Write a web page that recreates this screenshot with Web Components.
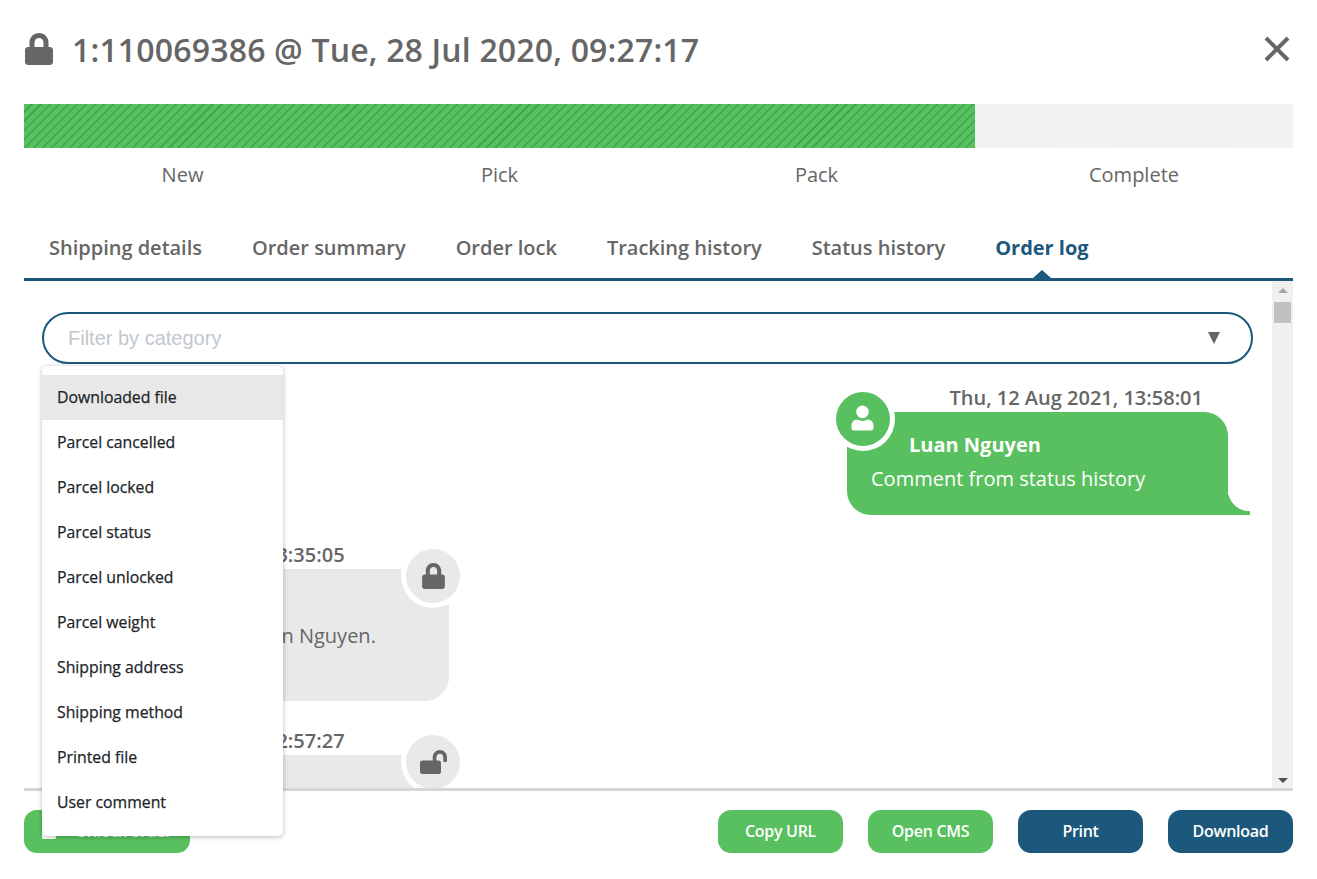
<!DOCTYPE html>
<html lang="en">
<head>
<meta charset="utf-8">
<title>Order log</title>
<style>
html,body{margin:0;padding:0;background:#fff;height:879px;overflow:hidden}
body{font-family:"Open Sans","Noto Sans",sans-serif;color:#666}
</style>
</head>
<body>
<order-dialog>
  <dialog-header>1:110069386 @ Tue, 28 Jul 2020, 09:27:17</dialog-header>
  <step-bar>
    <step-item done>New</step-item>
    <step-item done>Pick</step-item>
    <step-item done>Pack</step-item>
    <step-item>Complete</step-item>
  </step-bar>
  <tab-bar>
    <tab-item>Shipping details</tab-item>
    <tab-item>Order summary</tab-item>
    <tab-item>Order lock</tab-item>
    <tab-item>Tracking history</tab-item>
    <tab-item>Status history</tab-item>
    <tab-item active>Order log</tab-item>
  </tab-bar>
  <log-panel>
    <filter-select placeholder="Filter by category">
      <menu-item active>Downloaded file</menu-item>
      <menu-item>Parcel cancelled</menu-item>
      <menu-item>Parcel locked</menu-item>
      <menu-item>Parcel status</menu-item>
      <menu-item>Parcel unlocked</menu-item>
      <menu-item>Parcel weight</menu-item>
      <menu-item>Shipping address</menu-item>
      <menu-item>Shipping method</menu-item>
      <menu-item>Printed file</menu-item>
      <menu-item>User comment</menu-item>
    </filter-select>
    <chat-bubble slot="log" side="right" icon="user" date="Thu, 12 Aug 2021, 13:58:01" name="Luan Nguyen">Comment from status history</chat-bubble>
    <chat-bubble slot="log" side="left" icon="lock" date="Thu, 12 Aug 2021, 13:35:05" lines="2">Parcel locked by Luan Nguyen.</chat-bubble>
    <chat-bubble slot="log" side="left" icon="unlock" date="Thu, 12 Aug 2021, 12:57:27" lines="2"></chat-bubble>
  </log-panel>
  <dialog-footer>
    <app-button slot="start" color="green" wide icon="unlock">Unlock order</app-button>
    <app-button color="green">Copy URL</app-button>
    <app-button color="green">Open CMS</app-button>
    <app-button color="blue">Print</app-button>
    <app-button color="blue">Download</app-button>
  </dialog-footer>
</order-dialog>

<script>
const ICONS = {
  lock: ['0 0 448 512','M400 224h-24v-72C376 68.2 307.8 0 224 0S72 68.2 72 152v72H48c-26.5 0-48 21.5-48 48v192c0 26.5 21.5 48 48 48h352c26.5 0 48-21.5 48-48V272c0-26.5-21.5-48-48-48zm-104 0H152v-72c0-39.7 32.3-72 72-72s72 32.3 72 72v72z'],
  unlock: ['0 0 576 512','M423.5 0C339.5.3 272 69.5 272 153.5V224H48c-26.5 0-48 21.5-48 48v192c0 26.5 21.5 48 48 48h352c26.5 0 48-21.5 48-48V272c0-26.5-21.5-48-48-48h-48v-71.1c0-39.6 31.7-72.5 71.3-72.9 40-.4 72.7 32.1 72.7 72v80c0 13.3 10.7 24 24 24h32c13.3 0 24-10.7 24-24v-80C576 68 507.5-.3 423.5 0z'],
  user: ['0 0 24 26','M12 0a6.6 6.6 0 1 1 0 13.2a6.6 6.6 0 0 1 0-13.2zM6.5 14.6c1.500 .9 3.500 1.400 5.500 1.400s4-.5 5.500-1.400c3.500 .2 6 2.800 6 6.400v2.500c0 1.400-1.100 2.500-2.500 2.500H3c-1.400 0-2.500-1.100-2.500-2.500V21c0-3.600 2.500-6.200 6-6.400z']
};
function svg(name,w,h,fill){
  const [vb,d]=ICONS[name];
  return `<svg xmlns="http://www.w3.org/2000/svg" width="${w}" height="${h}" viewBox="${vb}" fill="${fill}" aria-hidden="true"><path d="${d}"/></svg>`;
}
function def(tag,css,html){
  customElements.define(tag,class extends HTMLElement{
    constructor(){
      super();
      const r=this.attachShadow({mode:'open'});
      r.innerHTML=`<style>${css}</style>`+(typeof html==='function'?html(this):html);
    }
  });
}

def('order-dialog',`
  :host{display:flex;flex-direction:column;box-sizing:border-box;width:1317px;height:879px;padding:0 24px;font-family:"Open Sans","Noto Sans",sans-serif;color:#666}
`,`<slot></slot>`);

customElements.define('dialog-header',class extends HTMLElement{
  constructor(){
    super();
    this.attachShadow({mode:'open'}).innerHTML=`<style>
      :host{display:flex;align-items:center;height:104px;flex:none;padding-bottom:4px;box-sizing:border-box}
      .lock{display:flex;flex:none;margin:0 19px 2px 1px}
      h1{flex:1;margin:0;font-size:32px;letter-spacing:.17px;line-height:40px;font-weight:600;color:#666;white-space:nowrap}
      .close{display:flex;flex:none;margin:0 3px 2px 0}
    </style>
    <span class="lock">${svg('lock',28,32,'#666')}</span>
    <h1><slot></slot></h1>
    <span class="close"><svg width="26" height="26" viewBox="0 0 26 26"><path d="M2 2 24 24M24 2 2 24" stroke="#666" stroke-width="4" fill="none"/></svg></span>`;
  }
});

def('step-bar',`:host{display:grid;grid-template-columns:317fr 317fr 317fr 318fr;flex:none}`,`<slot></slot>`);
def('step-item',`
  :host{display:block;text-align:center;font-size:20px;line-height:27px;color:#666}
  .bar{height:44px;margin-bottom:13px;background:repeating-linear-gradient(135deg,#f2f2f2 0,#f2f2f2 5.200px,#eeeeee 5.200px,#eeeeee 6.400px)}
  :host([done]) .bar{background:repeating-linear-gradient(135deg,#58c060 0,#58c060 4.900px,#3fa94a 4.900px,#3fa94a 6.400px)}
`,`<div class="bar"></div><slot></slot>`);

def('tab-bar',`
  :host{display:flex;flex:none;height:63px;margin-top:30px;box-sizing:border-box;border-bottom:3px solid #1b587c}
`,`<slot></slot>`);
def('tab-item',`
  :host{display:block;position:relative;padding:0 25px;font-size:20px;letter-spacing:-.008px;line-height:60px;font-weight:600;color:#666;white-space:nowrap}
  :host([active]){font-weight:700;color:#1b587c}
  :host([active])::after{content:"";position:absolute;left:50%;bottom:0;margin-left:-9px;border:9px solid transparent;border-top:0;border-bottom:8px solid #1b587c}
`,`<slot></slot>`);

def('log-panel',`
  :host{display:flex;flex:1;min-height:0}
  .main{flex:1;min-width:0;display:flex;flex-direction:column;padding:31px 19px 0 18px}
  .list{flex:1;min-height:0;overflow:hidden;padding-top:19px;display:flex;flex-direction:column;gap:25px;margin-right:-19px;padding-right:19px}
  .rail{flex:none;width:21px;background:#f0f0f0;display:flex;flex-direction:column;align-items:center;padding-top:7px;box-sizing:border-box}
  .up,.down{width:0;height:0;border:5px solid transparent;flex:none}
  .up{border-top:0;border-bottom:5px solid #a6a6a6}
  .down{border-bottom:0;border-top:5px solid #505050;margin-bottom:5px}
  .thumb{flex:none;width:17px;height:21px;margin-top:9px;background:#c1c1c1}
  .sp{flex:1}
`,`<div class="main"><slot></slot><div class="list"><slot name="log"></slot></div></div>
   <div class="rail"><i class="up"></i><i class="thumb"></i><i class="sp"></i><i class="down"></i></div>`);

def('filter-select',`
  :host{display:flex;align-items:center;position:relative;flex:none;height:52px;box-sizing:border-box;border:2px solid #1b587c;border-radius:26px;padding:0 31px 0 24px;background:#fff}
  .ph{flex:1;font:20px/30px "Liberation Sans",Arial,sans-serif;color:#c2c7cf}
  .arrow{flex:none;width:0;height:0;border:6.500px solid transparent;border-bottom:0;border-top:12px solid #666}
  .menu{position:absolute;z-index:20;left:-2px;top:52px;width:241px;box-sizing:border-box;padding:9px 0 11px;background:#fff;border-radius:5px;box-shadow:0 1px 5px rgba(0,0,0,.28)}
`,el=>`<span class="ph">${el.getAttribute('placeholder')}</span><i class="arrow"></i><div class="menu"><slot></slot></div>`);
def('menu-item',`
  :host{display:block;height:45px;padding:0 15px;font-size:15.800px;line-height:45px;font-weight:400;-webkit-text-stroke:.25px #212529;color:#212529;white-space:nowrap}
  :host([active]){background:#e8e8e8}
`,`<slot></slot>`);

customElements.define('chat-bubble',class extends HTMLElement{
  constructor(){
    super();
    const icon=this.getAttribute('icon'), name=this.getAttribute('name');
    const ic=icon==='user'?svg('user',23,26,'#fff').replace('<svg ','<svg style="margin:0 1px 2px 0" '):icon==='lock'?svg('lock',23,26,'#666'):svg('unlock',27,24,'#666');
    this.attachShadow({mode:'open'}).innerHTML=`<style>
      :host{display:flex;flex-direction:column;flex:none;align-items:flex-start;font-size:20px}
      :host([side=right]){align-items:flex-end;margin-right:3px}
      .date{font-weight:600;line-height:29px;height:29px;color:#666;white-space:nowrap;margin-left:49px}
      :host([side=right]) .date{margin:0 47px 0 0}
      .b{position:relative;flex:none;box-sizing:border-box;width:385px;margin-left:22px;background:#e9e9e9;color:#666;border-radius:24px;padding:50px 24px 14px 28px;line-height:34px;min-height:132px}
      :host([side=right]) .b{width:381px;margin:0 22px 0 0;background:#59c05f;color:#fff;padding:16px 24px 19px;min-height:0;border-bottom-right-radius:0}
      :host([side=right]) .b::after{content:"";position:absolute;right:-22px;bottom:0;width:22px;height:26px;background:radial-gradient(circle at 100% 0,transparent 22px,#59c05f 22.6px)}
      .name{font-weight:700;padding-left:38px;white-space:nowrap}
      .txt{white-space:nowrap}
      .av{position:absolute;display:flex;align-items:center;justify-content:center;width:54px;height:54px;border-radius:50%;top:-20px;right:-11px;background:#e9e9e9;box-shadow:0 0 0 5px #fff}
      :host([side=right]) .av{right:auto;left:-11px;background:#59c05f}
    </style>
    <div class="date">${this.getAttribute('date')}</div>
    <div class="b">
      <span class="av">${ic}</span>
      ${name?`<div class="name">${name}</div>`:''}
      <div class="txt"><slot></slot></div>
    </div>`;
  }
});

def('dialog-footer',`
  :host{display:flex;align-items:flex-start;flex:none;height:91px;box-sizing:border-box;border-top:3px solid #d6d6d6;padding-top:19px;gap:25px}
  .start{flex:1;display:flex}
`,`<div class="start"><slot name="start"></slot></div><slot></slot>`);

customElements.define('app-button',class extends HTMLElement{
  constructor(){
    super();
    const ic=this.getAttribute('icon');
    this.attachShadow({mode:'open'}).innerHTML=`<style>
      :host{display:flex;align-items:center;justify-content:center;gap:15px;flex:none;width:125px;height:43px;box-sizing:border-box;padding-bottom:2px;border-radius:13px;font-size:16px;font-weight:600;letter-spacing:-.3px;color:#fff;white-space:nowrap}
      :host([color=green]){background:#59c05f}
      :host([color=blue]){background:#1b587c}
      :host([wide]){width:166px}
      svg{display:block;flex:none}
    </style>${ic?svg(ic,18,16,'#fff'):''}<slot></slot>`;
  }
});
</script>
</body>
</html>
